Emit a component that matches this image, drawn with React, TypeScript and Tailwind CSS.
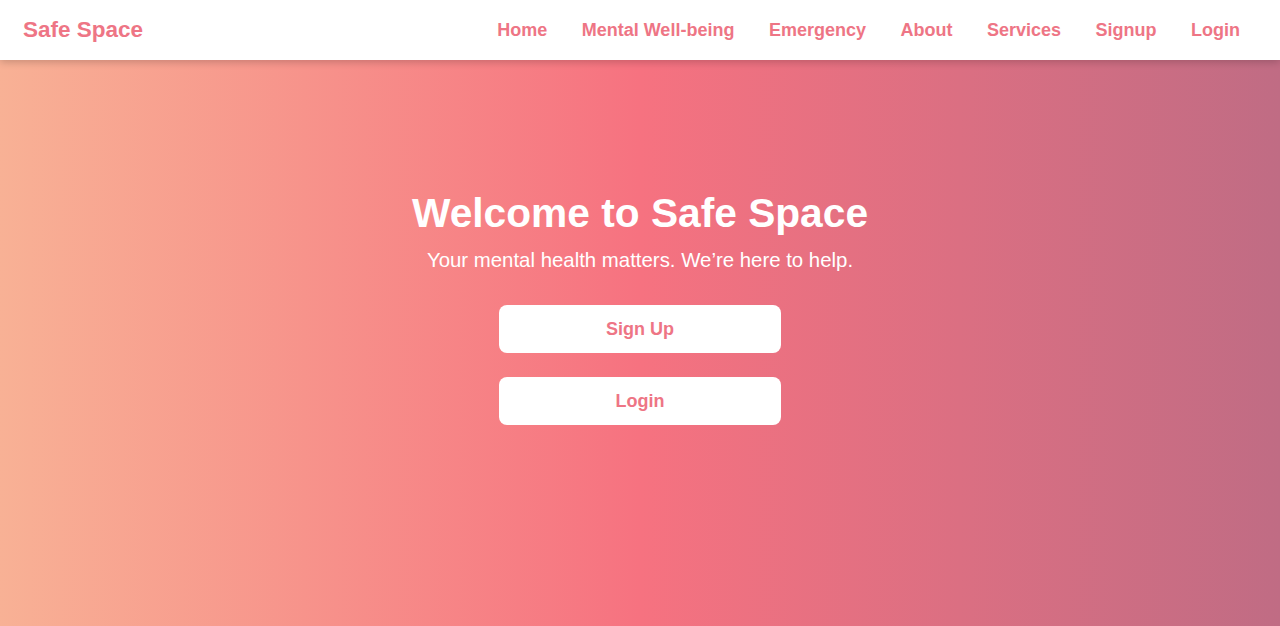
const navLinks = ["Home", "Mental Well-being", "Emergency", "About", "Services", "Signup", "Login"];

const App = () => {
  return (
    <div className="min-h-screen font-['Liberation_Sans',Arial,sans-serif]">
      <nav className="relative z-10 flex h-[60px] items-center justify-between bg-white pl-[23px] pr-[40px] shadow-[0_2px_8px_rgba(0,0,0,0.2)]">
        <span className="text-[22.5px] font-bold text-[#ee7585]">Safe Space</span>
        <ul className="flex gap-[34.5px]">
          {navLinks.map((link) => (
            <li key={link}>
              <a href="#" className="text-[18px] font-bold text-[#ee7585]">
                {link}
              </a>
            </li>
          ))}
        </ul>
      </nav>
      <section className="flex h-[566px] flex-col items-center bg-[linear-gradient(to_right,#f8b195,#f67280,#c06c84)] pt-[130px] text-white">
        <h1 className="text-[40.7px] leading-[46px] font-bold">Welcome to Safe Space</h1>
        <p className="mt-[13px] text-[20.4px] leading-[23px]">Your mental health matters. We’re here to help.</p>
        <div className="mt-[33px] flex flex-col gap-[24px]">
          <button className="h-[48px] w-[282px] rounded-lg bg-white text-[18px] font-bold text-[#ee7585]">
            Sign Up
          </button>
          <button className="h-[48px] w-[282px] rounded-lg bg-white text-[18px] font-bold text-[#ee7585]">
            Login
          </button>
        </div>
      </section>
    </div>
  );
};

export default App;
